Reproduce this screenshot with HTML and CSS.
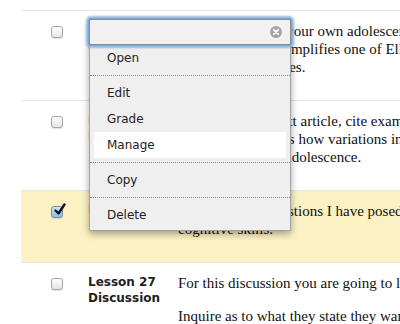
FILE: index.html
```html
<!DOCTYPE html>
<html lang="en">
<head>
  <meta charset="UTF-8">
  <meta name="viewport" content="width=device-width, initial-scale=1.0">
  <title>Discussions</title>
  <link rel="stylesheet" href="styles.css">
</head>
<body>
  <div class="list">
    <div class="row">
      <div class="pick"><span class="box"></span></div>
      <div class="title">Lesson 25 Discussion</div>
      <div class="desc">
        <p>Describe a day in your own adolescence and tell us about the experience<br>that one thinks exemplifies one of Elkind's ideas about personal fables or<br>imaginary audiences.</p>
      </div>
    </div>

    <div class="row">
      <div class="pick"><span class="box"></span></div>
      <div class="title">Lesson 26 Discussion</div>
      <div class="desc">
        <p>Based on the Arnett article, cite examples from your own experience<br>that strongly shows how variations in culture and family shape<br>the experience of adolescence.</p>
      </div>
    </div>

    <div class="row selected">
      <div class="pick">
        <span class="box checked">
          <svg class="tick" width="14" height="14" viewBox="0 0 14 14"><path d="M2.5 7.5 L5.5 10.5 L11.5 1.5" fill="none" stroke="#111" stroke-width="2.4" stroke-linecap="round" stroke-linejoin="round"/></svg>
        </span>
      </div>
      <div class="title">Reflection</div>
      <div class="desc">
        <p>Address those questions I have posed about Piaget's theory of<br>cognitive skills.</p>
      </div>
    </div>

    <div class="row">
      <div class="pick"><span class="box"></span></div>
      <div class="title">Lesson 27 Discussion</div>
      <div class="desc">
        <p>For this discussion you are going to look at what teens want from their parents.</p>
        <p>Inquire as to what they state they want and compare it to the research.</p>
      </div>
    </div>
  </div>

  <div class="menu">
    <div class="search">
      <span class="clear">
        <svg width="12" height="12" viewBox="0 0 12 12"><circle cx="6" cy="6" r="6" fill="#a4a4a4"/><path d="M3.8 3.8 L8.2 8.2 M8.2 3.8 L3.8 8.2" stroke="#fff" stroke-width="1.8" stroke-linecap="round"/></svg>
      </span>
    </div>
    <ul class="items">
      <li>Open</li>
      <li class="sep"></li>
      <li>Edit</li>
      <li>Grade</li>
      <li class="active">Manage</li>
      <li class="sep"></li>
      <li>Copy</li>
      <li class="sep"></li>
      <li>Delete</li>
    </ul>
  </div>
</body>
</html>
```

FILE: styles.css
```css
html, body {
  overflow: hidden;
}
body {
  margin: 0;
  font-family: "Liberation Serif", "Times New Roman", serif;
  color: #111;
  background: #fff;
}
.list {
  margin: 10px 0 0 21px;
}
.row {
  display: grid;
  grid-template-columns: 67px 90px auto;
  border-top: 1px solid #e6e6e6;
  padding: 11px 0 9px;
}
.row.selected {
  background: #fcf1c3;
}
.pick {
  padding: 4px 0 0 30px;
}
.box {
  position: relative;
  display: block;
  width: 12px;
  height: 12px;
  box-sizing: border-box;
  border: 1px solid #a6a6a6;
  border-radius: 3px;
  background: linear-gradient(#ffffff, #e4e4e4);
  box-shadow: 0 1px 1px rgba(0, 0, 0, 0.12);
}
.box.checked {
  border-color: #6f8fb5;
  background: linear-gradient(#cfe3f8, #8db9e8);
}
.tick {
  position: absolute;
  left: 1px;
  top: -4px;
}
.title {
  font: bold 12px/16px "DejaVu Sans", sans-serif;
  color: #222;
}
.desc p {
  margin: 0 0 15px;
  font-size: 15px;
  line-height: 18px;
  white-space: nowrap;
}

.menu {
  position: absolute;
  left: 89px;
  top: 19px;
  width: 202px;
  box-sizing: border-box;
  background: #efefef;
  border: 1px solid #a2a2a2;
  box-shadow: 0 3px 7px rgba(0, 0, 0, 0.35);
  font: 12px "DejaVu Sans", sans-serif;
  color: #222;
}
.search {
  position: relative;
  height: 26px;
  margin: -1px -1px 0;
  box-sizing: border-box;
  border: 1px solid #8c8c8c;
  border-radius: 2px;
  background: #f1f1f1;
  box-shadow: 0 0 0 1px #7aa5da, 0 0 2px 3px rgba(120, 168, 226, 0.75);
}
.clear {
  position: absolute;
  right: 8px;
  top: 6px;
  line-height: 0;
}
.items {
  list-style: none;
  margin: 0;
  padding: 0 0 2px;
}
.items li {
  height: 26px;
  line-height: 26px;
  margin: 0 4px;
  padding-left: 13px;
}
.items li.active {
  background: #fff;
}
.items li.sep {
  height: 0;
  margin: 4px 0;
  padding: 0;
  border-top: 1px dotted #8a8a8a;
}
```
